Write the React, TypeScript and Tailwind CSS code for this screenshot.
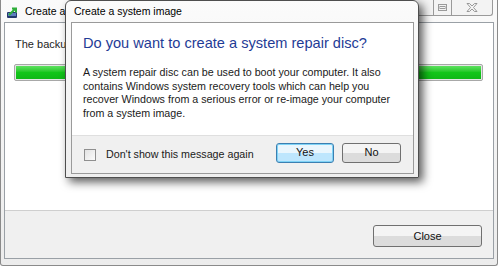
import React from "react";

function BackupIcon() {
  return (
    <svg width="14" height="14" viewBox="0 0 14 14" className="shrink-0">
      <rect x="1" y="7" width="10" height="6" rx="1" fill="#243a6e" />
      <rect x="2" y="8" width="8" height="3" fill="#5d7fbf" />
      <path d="M3 10 L9 4 M6 3.5 H10 V7.5" stroke="#2fae3a" strokeWidth="2" fill="none" />
    </svg>
  );
}

function MaxGlyph() {
  return (
    <svg width="9" height="7" viewBox="0 0 9 7">
      <rect x="0.5" y="0.5" width="8" height="6" fill="none" stroke="#9a9a9a" />
      <rect x="2" y="2.5" width="5" height="2" fill="none" stroke="#9a9a9a" />
    </svg>
  );
}

function CloseGlyph() {
  return (
    <svg width="12" height="9" viewBox="0 0 12 9">
      <path
        d="M1 0.5 H3.5 L6 3 L8.5 0.5 H11 L7.5 4.5 L11 8.5 H8.5 L6 6 L3.5 8.5 H1 L4.5 4.5 Z"
        fill="#f4f4f4"
        stroke="#8e8e8e"
        strokeWidth="0.9"
      />
    </svg>
  );
}

function GrayButton({ label, className }: { label: string; className: string }) {
  return (
    <div
      className={
        "flex items-center justify-center rounded-[3px] border border-[#707070] bg-gradient-to-b from-[#f4f4f4] from-50% to-[#dcdcdc] to-50% text-[11px] text-[#111] " +
        className
      }
    >
      {label}
    </div>
  );
}

export default function App() {
  return (
    <div className="relative w-[500px] h-[268px] overflow-hidden bg-white font-['Liberation_Sans',Arial,sans-serif]">
      {/* background window (mostly hidden behind the dialog) */}
      <div className="w-[498px] h-[266px] flex flex-col border border-t-0 border-[#8a8a8a] rounded-b-[3px] bg-gradient-to-b from-[#fafafa] to-[#ececec] px-[3px] pb-[6px]">
        <div className="h-[22px] flex items-start justify-between">
          <div className="flex items-center gap-[5px] pl-[2px] pt-[4px] text-[10.5px] text-black">
            <BackupIcon />
            <span>Create a</span>
          </div>
          <div className="flex mr-[1px] h-[16px]">
            <div className="w-[23px] border border-t-0 border-[#9a9a9a] rounded-bl-[3px] bg-[#f3f3f3]" />
            <div className="w-[18px] flex items-center justify-center border border-t-0 border-l-0 border-[#9a9a9a] bg-[#f3f3f3]">
              <MaxGlyph />
            </div>
            <div className="w-[41px] flex items-center justify-center border border-t-0 border-l-0 border-[#9a9a9a] rounded-br-[3px] bg-[#f3f3f3]">
              <CloseGlyph />
            </div>
          </div>
        </div>
        <div className="flex-1 flex flex-col border border-[#9aa0a6] bg-white">
          <div className="flex-1 pl-[9px] pr-[9px] pt-[14px]">
            <p className="text-[11px] leading-[14px] text-[#1e1e1e] pl-[1px]">The backu</p>
            <div className="mt-[13px] h-[17px] w-[469px] rounded-[2px] border border-[#a8a8a8] bg-[#e6e6e6] p-[1px]">
              <div className="h-full w-full bg-gradient-to-b from-[#5ce15f] via-[#12c619] to-[#0fb816]" />
            </div>
          </div>
          <div className="h-[48px] border-t border-[#cfcfcf] bg-[#f0f0f0] flex justify-end pt-[14px] pr-[11px]">
            <GrayButton label="Close" className="w-[109px] h-[22px]" />
          </div>
        </div>
      </div>

      {/* foreground dialog */}
      <div className="absolute left-[65px] top-0 w-[354px] h-[178px] flex flex-col border border-[#4e4e4e] rounded-t-[6px] bg-gradient-to-b from-[#fbfbfb] to-[#eeeeee] pl-[5px] pr-[4px] pb-[3px] shadow-[4px_4px_10px_rgba(0,0,0,0.65)]">
        <div className="h-[21px] flex items-center pl-[3px] text-[10.5px] text-black">
          Create a system image
        </div>
        <div className="flex-1 flex flex-col border border-[#9a9a9a] bg-white">
          <div className="flex-1 pl-[11px] pt-[11px]">
            <h1 className="text-[14.6px] leading-[18px] text-[#1f3c96]">
              Do you want to create a system repair disc?
            </h1>
            <p className="mt-[14px] text-[10.7px] leading-[13.5px] text-[#1a1a1a] whitespace-nowrap">
              A system repair disc can be used to boot your computer. It also
              <br />
              contains Windows system recovery tools which can help you
              <br />
              recover Windows from a serious error or re-image your computer
              <br />
              from a system image.
            </p>
          </div>
          <div className="h-[38px] border-t border-[#dfdfdf] bg-[#f0f0f0] flex items-center pl-[12px] pr-[12px]">
            <div className="w-[12px] h-[12px] border border-[#8f8f8f] bg-gradient-to-br from-[#e2e2e2] to-[#fbfbfb]" />
            <span className="ml-[10px] text-[10.7px] text-[#1a1a1a]">Don't show this message again</span>
            <div className="ml-auto flex gap-[8px] mb-[4px]">
              <div className="w-[58px] h-[20px] flex items-center justify-center rounded-[3px] border border-[#3c7fb1] bg-gradient-to-b from-[#eaf6fd] from-50% to-[#bee6fd] to-50% text-[11px] text-[#111] shadow-[inset_0_0_0_1px_#7fd3f6]">
                Yes
              </div>
              <GrayButton label="No" className="w-[59px] h-[20px]" />
            </div>
          </div>
        </div>
      </div>
    </div>
  );
}
